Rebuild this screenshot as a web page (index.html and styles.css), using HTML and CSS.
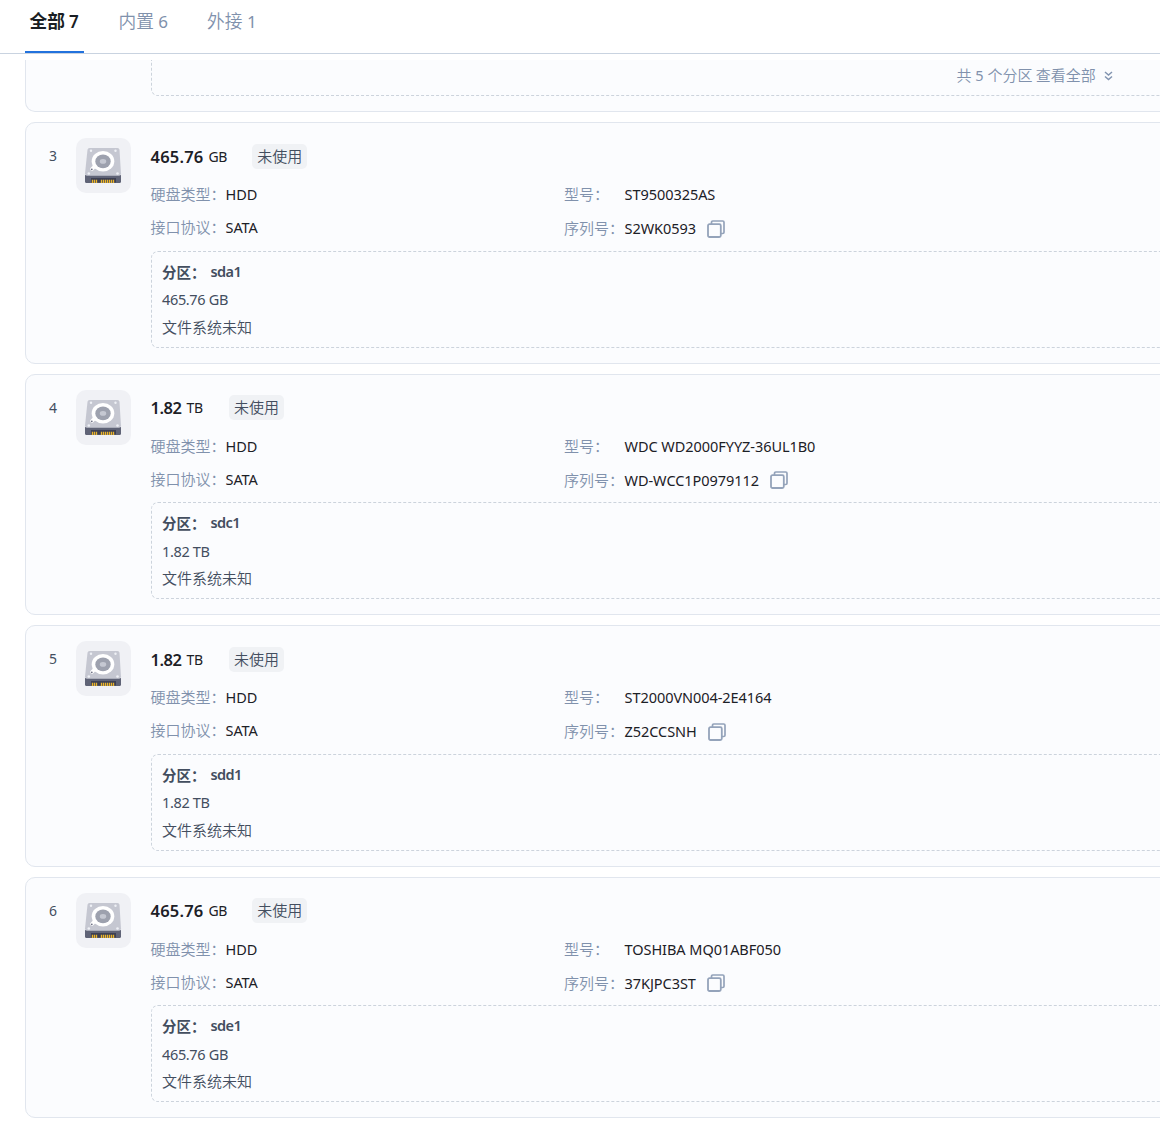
FILE: index.html
```
<!DOCTYPE html>
<html lang="zh-CN">
<head>
<meta charset="utf-8">
<title>硬盘</title>
<link rel="stylesheet" href="styles.css">
</head>
<body>
<svg class="defs" aria-hidden="true">
  <symbol id="disk" viewBox="0 0 55 55">
    <rect width="55" height="55" rx="10" fill="#f0f1f5"/>
    <path d="M9 37h36v6.500q0 1.500-1.500 1.500h-33Q9 45 9 43.500z" fill="#5f6376"/>
    <path d="M13.500 10h28q1.800 0 2 1.800L45 35.500q.1 2.200-2 2.200H11Q8.900 37.700 9 35.500l2.500-23.700Q11.700 10 13.500 10z" fill="#c5c7d1"/>
    <rect x="15" y="40" width="25" height="4.500" fill="#3d4053"/>
    <path d="M16.500 41.700v3.300m2-3.300v3.300m2-3.300v3.300m5-3.300v3.300m2-3.300v3.300m2-3.300v3.300m2-3.300v3.300m2-3.300v3.300m2-3.300v3.300m2-3.300v3.300" stroke="#eab52c" stroke-width="1.300"/>
    <path d="M18 29l-2 2" stroke="#fff" stroke-width="3.600" stroke-linecap="round"/>
    <ellipse cx="27" cy="23.300" rx="11.300" ry="10.200" fill="#fff"/>
    <ellipse cx="27" cy="23.400" rx="7.700" ry="6.800" fill="#9da1ae"/>
    <ellipse cx="27" cy="23.400" rx="3.200" ry="2.400" fill="#c5c8d2"/>
    <circle cx="15.800" cy="31.300" r=".9" fill="#6b6f82"/>
    <g fill="#eef0f5"><circle cx="15" cy="12.800" r="1.200"/><circle cx="39.500" cy="12.800" r="1.200"/><circle cx="12.800" cy="35.500" r="1.300"/><circle cx="41.500" cy="35.500" r="1.300"/></g>
  </symbol>
  <symbol id="copy" viewBox="0 0 18 18">
    <path d="M4.500 4V2.300q0-1.300 1.300-1.300H15.700Q17 1 17 2.300V12.200q0 1.300-1.300 1.300H14" fill="none" stroke="#94a3ba" stroke-width="1.700"/>
    <rect x="1" y="4.200" width="12.800" height="12.800" rx="1.500" fill="none" stroke="#94a3ba" stroke-width="1.800"/>
  </symbol>
</svg>
<nav class="tabs">
  <a class="tab active">全部 <span class="n">7</span></a>
  <a class="tab">内置 <span class="n">6</span></a>
  <a class="tab">外接 <span class="n">1</span></a>
</nav>
<main class="list">
  <section class="card clipped">
    <div class="parts more"><span class="all">共 <span class="n">5</span> 个分区 查看全部</span><svg class="chev" viewBox="0 0 9 10"><path d="M1 1l3.500 3L8 1M1 5.500l3.500 3 3.500-3" fill="none" stroke="#8294b0" stroke-width="1.500"/></svg></div>
  </section>
  <section class="card">
    <span class="idx">3</span><svg class="disk"><use href="#disk"/></svg>
    <div class="body">
      <div class="head"><b class="size">465.76</b><span class="unit">GB</span><span class="tag">未使用</span></div>
      <div class="info">
        <div class="row"><span class="label">硬盘类型：</span><span class="val">HDD</span></div>
        <div class="row"><span class="label short">型号：</span><span class="val">ST9500325AS</span></div>
        <div class="row"><span class="label">接口协议：</span><span class="val">SATA</span></div>
        <div class="row serial"><span class="label short">序列号：</span><span class="val">S2WK0593</span><svg class="copy"><use href="#copy"/></svg></div>
      </div>
      <div class="parts"><div class="pname"><span class="pl">分区：</span><span class="pn">sda1</span></div><div class="psize">465.76 GB</div><div>文件系统未知</div></div>
    </div>
  </section>
  <section class="card">
    <span class="idx">4</span><svg class="disk"><use href="#disk"/></svg>
    <div class="body">
      <div class="head tb"><b class="size">1.82</b><span class="unit">TB</span><span class="tag">未使用</span></div>
      <div class="info">
        <div class="row"><span class="label">硬盘类型：</span><span class="val">HDD</span></div>
        <div class="row"><span class="label short">型号：</span><span class="val">WDC WD2000FYYZ-36UL1B0</span></div>
        <div class="row"><span class="label">接口协议：</span><span class="val">SATA</span></div>
        <div class="row serial"><span class="label short">序列号：</span><span class="val">WD-WCC1P0979112</span><svg class="copy"><use href="#copy"/></svg></div>
      </div>
      <div class="parts"><div class="pname"><span class="pl">分区：</span><span class="pn">sdc1</span></div><div class="psize">1.82 TB</div><div>文件系统未知</div></div>
    </div>
  </section>
  <section class="card">
    <span class="idx">5</span><svg class="disk"><use href="#disk"/></svg>
    <div class="body">
      <div class="head tb"><b class="size">1.82</b><span class="unit">TB</span><span class="tag">未使用</span></div>
      <div class="info">
        <div class="row"><span class="label">硬盘类型：</span><span class="val">HDD</span></div>
        <div class="row"><span class="label short">型号：</span><span class="val">ST2000VN004-2E4164</span></div>
        <div class="row"><span class="label">接口协议：</span><span class="val">SATA</span></div>
        <div class="row serial"><span class="label short">序列号：</span><span class="val">Z52CCSNH</span><svg class="copy"><use href="#copy"/></svg></div>
      </div>
      <div class="parts"><div class="pname"><span class="pl">分区：</span><span class="pn">sdd1</span></div><div class="psize">1.82 TB</div><div>文件系统未知</div></div>
    </div>
  </section>
  <section class="card">
    <span class="idx">6</span><svg class="disk"><use href="#disk"/></svg>
    <div class="body">
      <div class="head"><b class="size">465.76</b><span class="unit">GB</span><span class="tag">未使用</span></div>
      <div class="info">
        <div class="row"><span class="label">硬盘类型：</span><span class="val">HDD</span></div>
        <div class="row"><span class="label short">型号：</span><span class="val">TOSHIBA MQ01ABF050</span></div>
        <div class="row"><span class="label">接口协议：</span><span class="val">SATA</span></div>
        <div class="row serial"><span class="label short">序列号：</span><span class="val">37KJPC3ST</span><svg class="copy"><use href="#copy"/></svg></div>
      </div>
      <div class="parts"><div class="pname"><span class="pl">分区：</span><span class="pn">sde1</span></div><div class="psize">465.76 GB</div><div>文件系统未知</div></div>
    </div>
  </section>
</main>
</body>
</html>
```
FILE: styles.css
```
* { box-sizing: border-box; }
html { overflow: hidden; }
body {
  margin: 0;
  height: 1126px;
  overflow: hidden;
  background: #fff;
  color: #434e5f;
  font: 350 15px/20px "Noto Sans CJK SC", sans-serif;
}
.defs { display: none; }
.n, .idx, .size, .unit, .val, .pn, .psize { font-family: "Noto Sans", sans-serif; font-weight: 380; }
.tabs {
  display: flex;
  gap: 30px;
  height: 54px;
  padding-left: 25px;
  border-bottom: 1px solid #c9d3e0;
}
.tab {
  height: 53px;
  padding: 0 4.500px;
  line-height: 41px;
  font-size: 17.700px;
  color: #8091ac;
  white-space: nowrap;
}
.tab .n { font-size: 17px; margin-left: .5px; }
.tab.active { width: 59px; color: #1a1e24; font-weight: 700; border-bottom: 2px solid #2272dd; }
.tab.active .n { margin-left: 0; font-weight: 600; }
.list {
  display: flex;
  flex-direction: column;
  gap: 10px;
  width: 1210px;
  padding: 6.300px 0 0 25px;
}
.card {
  display: flex;
  height: 241.500px;
  flex-shrink: 0;
  padding: 15px;
  border: 1px solid #e1e6ee;
  border-radius: 10px;
  background: #fbfcfe;
}
.card.clipped {
  height: 52px;
  padding: 0 15px 15px 125px;
  border-top: 0;
  border-radius: 0 0 10px 10px;
}
.idx { width: 35px; padding-left: 8px; line-height: 36.600px; font-size: 14px; }
.disk { width: 55px; height: 55px; margin-right: 20px; }
.body { flex: 1; }
.head { display: flex; align-items: center; height: 36px; padding-top: .6px; color: #1c2026; }
.size { margin-left: -.5px; font-size: 16.500px; font-weight: 600; letter-spacing: .2px; }
.unit { margin-left: 5px; font-size: 14px; letter-spacing: -.3px; }
.tb .size { letter-spacing: -.45px; }
.tag {
  height: 25px;
  margin: -1px 0 0 25px;
  padding: 0 5px;
  border-radius: 5px;
  background: #f0f2f5;
  color: #434e5f;
  line-height: 24px;
}
.tb .tag { margin-left: 26px; }
.info {
  display: grid;
  grid-template-columns: 413.500px 1fr;
  grid-auto-rows: 33px;
  margin: 3.400px 0 0 -.5px;
}
.row { display: flex; align-items: center; }
.serial { padding-top: 2px; }
.label { width: 75px; color: #8091ac; white-space: nowrap; }
.label.short { width: 60.500px; }
.val { color: #1c2026; font-size: 14.500px; letter-spacing: -.05px; white-space: nowrap; }
.copy { width: 18px; height: 18px; margin: 1px 0 0 11px; }
.parts {
  height: 97px;
  margin-top: 7.200px;
  padding: 5.700px 10px;
  border: 1px dashed #ccd3dc;
  border-radius: 7px;
  line-height: 27.500px;
}
.pname { display: flex; font-weight: 700; }
.pl { width: 48.500px; font-size: 14.500px; white-space: nowrap; }
.pn { font-size: 14.500px; font-weight: 600; letter-spacing: -.6px; }
.psize { height: 27.500px; font-size: 14.500px; line-height: 29px; letter-spacing: -.35px; }
.parts.more {
  display: flex;
  align-items: flex-start;
  width: 1060px;
  height: 36px;
  margin: 0;
  padding: 1px 0 0 804.500px;
  border-top: 0;
  border-radius: 0 0 7px 7px;
  color: #8091ac;
}
.more .n { margin: 0 .5px; font-size: 14.500px; }
.chev { width: 9px; height: 10px; margin: 10px 0 0 8px; }
```
